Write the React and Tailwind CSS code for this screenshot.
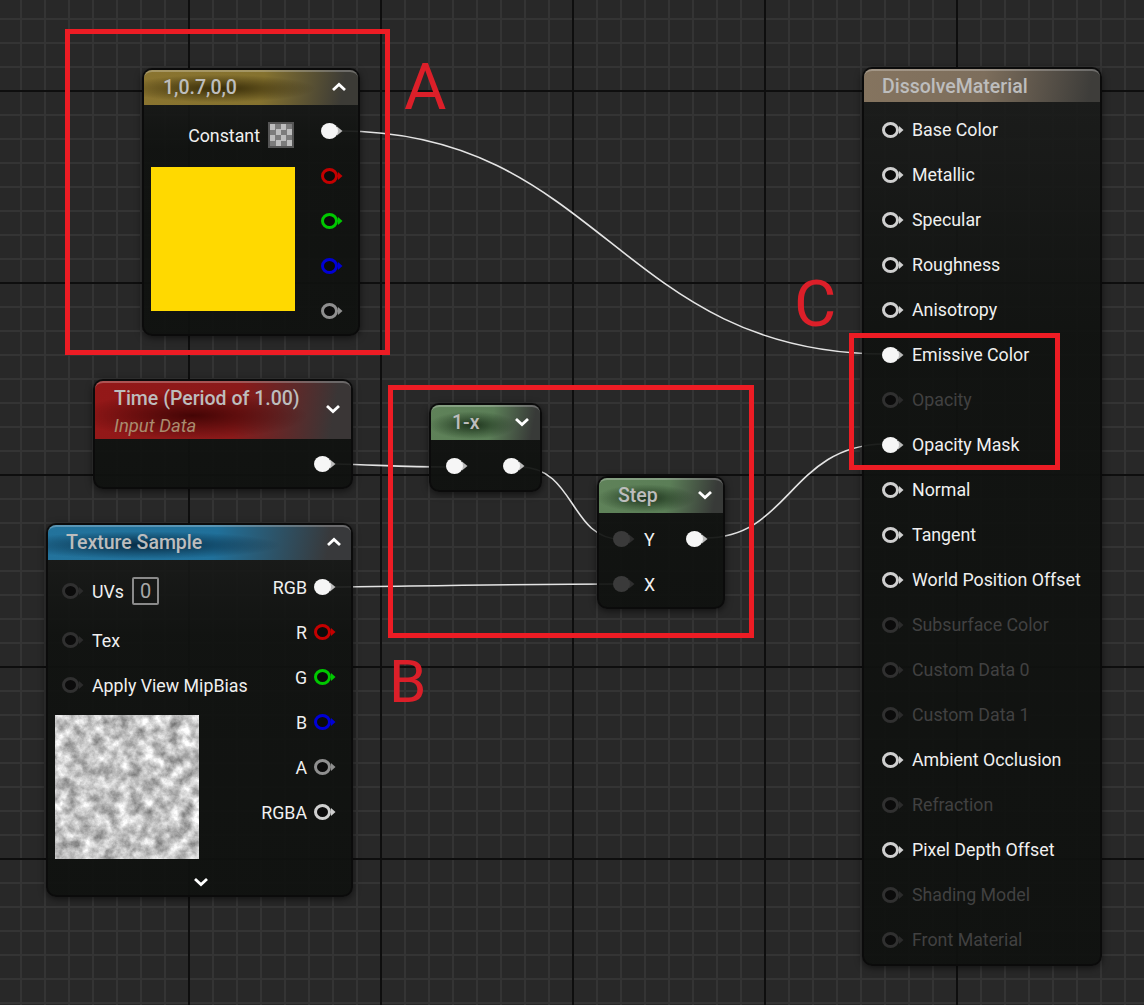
const nodeBase =
  'absolute flex flex-col rounded-[10px] border-2 border-[#0b0b0b] bg-[linear-gradient(#1b1c1be6,#101210ee_30%,#0f110fee)] shadow-[0_2px_7px_rgba(0,0,0,0.55)]';
const headerBase = 'relative flex shrink-0 rounded-t-[8px] border-t-2 border-[#ffffff40]';
const titleCls = 'pt-[2px] text-[19.5px] font-medium leading-none text-[#bdbdbd]';
const labelCls = 'pt-[2px] text-[17.8px] leading-none text-[#f0f0f0]';

const pinColors = {
  white: { ring: '#cfcfcf', tip: '#cfcfcf' },
  gray: { ring: '#8f8f8f', tip: '#8f8f8f' },
  red: { ring: '#c40000', tip: '#c40000' },
  green: { ring: '#00c800', tip: '#00c800' },
  blue: { ring: '#0000d6', tip: '#0000d6' },
  dim: { ring: '#303030', tip: '#2b2b2b' },
};

function Pin({ kind }) {
  // connected pin: solid white ball
  if (kind === 'on') {
    return (
      <svg width="22" height="16" viewBox="0 0 22 16" className="shrink-0">
        <path d="M16 3.5 L21.5 8 L16 12.5 Z" fill="#bbbbbb" />
        <ellipse cx="8.5" cy="8" rx="8.5" ry="8" fill="#f6f6f6" />
      </svg>
    );
  }
  // input of a math node with a default value
  if (kind === 'off') {
    return (
      <svg width="22" height="16" viewBox="0 0 22 16" className="shrink-0">
        <path d="M16 3.5 L21.5 8 L16 12.5 Z" fill="#2e2e2e" />
        <ellipse cx="8.5" cy="8" rx="8.5" ry="8" fill="#3a3a3a" />
      </svg>
    );
  }
  const c = pinColors[kind];
  return (
    <svg width="22" height="16" viewBox="0 0 22 16" className="shrink-0 blur-[0.3px]">
      <path d="M17 4 L21.5 8 L17 12 Z" fill={c.tip} />
      <ellipse cx="8.5" cy="8" rx="7" ry="6.5" fill="#0b0b0b" stroke={c.ring} strokeWidth="3" />
    </svg>
  );
}

function Chevron({ up, className }) {
  return (
    <svg width="16" height="10" viewBox="0 0 16 10" className={className}>
      <path d={up ? 'M2 8 L8 2.5 L14 8' : 'M2 2 L8 7.5 L14 2'} fill="none" stroke="#ffffff" strokeWidth="2.8" />
    </svg>
  );
}

function InputRow({ kind = 'white', label, faded, labelPad = '' }) {
  return (
    <div className="flex h-[45px] items-center gap-2">
      <Pin kind={kind} />
      <span className={`${labelCls} ${faded ? 'text-[#414141]!' : ''} ${labelPad}`}>{label}</span>
    </div>
  );
}

function OutputRow({ kind, label }) {
  return (
    <div className="flex h-[45px] items-center justify-end gap-[7px]">
      {label && <span className={labelCls}>{label}</span>}
      <Pin kind={kind} />
    </div>
  );
}

function ConstantNode() {
  return (
    <div className={`${nodeBase} left-[142px] top-[68px] h-[268px] w-[218px]`}>
      <div className={`${headerBase} h-[35px] items-center justify-between pb-[3px] pl-[19px] pr-[11px] bg-[radial-gradient(ellipse_45%_42%_at_35%_50%,rgba(40,30,0,0.85),transparent),linear-gradient(100deg,#8a7430,#85722f_55%,#3c3b36_92%)]`}>
        <span className={titleCls}>1,0.7,0,0</span>
        <Chevron up />
      </div>
      <div className="flex justify-between pl-[7px] pr-[15px] pt-[3px]">
        <div className="flex w-[144px] flex-col">
          <div className="mt-[4px] flex h-[45px] items-center justify-end gap-2">
            <span className={labelCls}>Constant</span>
            <div className="mr-[1px] h-[26px] w-[26px] shrink-0 border-2 border-[#555555] bg-[repeating-conic-gradient(#7c7c7c_0_25%,#bdbdbd_0_50%)] bg-[size:11px_11px]" />
          </div>
          <div className="mt-[10px] h-[144px] w-[144px] bg-[#ffd900]" />
        </div>
        <div className="flex flex-col">
          <OutputRow kind="on" />
          <OutputRow kind="red" />
          <OutputRow kind="green" />
          <OutputRow kind="blue" />
          <OutputRow kind="gray" />
        </div>
      </div>
    </div>
  );
}

function TimeNode() {
  return (
    <div className={`${nodeBase} left-[93px] top-[379px] h-[110px] w-[260px]`}>
      <div className={`${headerBase} h-[58px] items-center justify-between pl-[19px] pr-[10px] bg-[radial-gradient(ellipse_45%_42%_at_38%_58%,rgba(50,0,0,0.8),transparent),linear-gradient(100deg,#941818,#8a1a1a_55%,#3a3636_92%)]`}>
        <div className="flex flex-col gap-[8px]">
          <span className={titleCls}>Time (Period of 1.00)</span>
          <span className="text-[18.5px] italic leading-none text-[#a98c6f]">Input Data</span>
        </div>
        <Chevron className="-mt-[4px]" />
      </div>
      <div className="flex justify-end pr-[15px] pt-[2px]">
        <OutputRow kind="on" />
      </div>
    </div>
  );
}

function TextureNode() {
  return (
    <div className={`${nodeBase} left-[46px] top-[523px] h-[374px] w-[307px]`}>
      <div className={`${headerBase} h-[35px] items-center justify-between pb-[3px] pl-[18px] pr-[9px] bg-[radial-gradient(ellipse_45%_42%_at_32%_55%,rgba(0,25,45,0.8),transparent),linear-gradient(100deg,#23739c,#20709a_55%,#38393b_92%)]`}>
        <span className={titleCls}>Texture Sample</span>
        <Chevron up />
      </div>
      <div className="flex justify-between pl-[14px] pr-[15px] pt-[4px]">
        <div className="flex flex-col pt-[13px]">
          <div className="flex h-[28px] items-center gap-2">
            <Pin kind="dim" />
            <span className={labelCls}>UVs</span>
            <span className="flex h-[28px] w-[27px] items-center justify-center rounded-[2px] border-2 border-[#8a8a8a] text-[20px] leading-none text-[#a8a8a8]">0</span>
          </div>
          <div className="mt-[12px]">
            <InputRow kind="dim" label="Tex" />
          </div>
          <InputRow kind="dim" label="Apply View MipBias" />
          <NoiseTexture />
        </div>
        <div className="flex flex-col">
          <OutputRow kind="on" label="RGB" />
          <OutputRow kind="red" label="R" />
          <OutputRow kind="green" label="G" />
          <OutputRow kind="blue" label="B" />
          <OutputRow kind="gray" label="A" />
          <OutputRow kind="white" label="RGBA" />
        </div>
      </div>
      <div className="flex justify-center pl-[2px] pt-[18px]">
        <Chevron />
      </div>
    </div>
  );
}

function NoiseTexture() {
  return (
    <svg width="144" height="144" viewBox="0 0 144 144" className="-ml-[7px] mt-[8px] shrink-0">
      <filter id="clouds" colorInterpolationFilters="sRGB" x="0" y="0" width="100%" height="100%">
        <feTurbulence type="fractalNoise" baseFrequency="0.08" numOctaves="5" seed="7" />
        <feColorMatrix values="0.85 0 0 0 0.34 0.85 0 0 0 0.34 0.85 0 0 0 0.34 0 0 0 0 1" />
      </filter>
      <rect width="144" height="144" fill="#bbbbbb" filter="url(#clouds)" />
    </svg>
  );
}

function MathNode({ title, pos, titlePad, children }) {
  return (
    <div className={`${nodeBase} ${pos}`}>
      <div className={`${headerBase} h-[35px] items-center justify-between pb-[3px] pr-[10px] bg-[radial-gradient(ellipse_40%_42%_at_38%_55%,rgba(15,35,15,0.8),transparent),linear-gradient(100deg,#5f8259,#5b7e57_55%,#383a38_92%)] ${titlePad}`}>
        <span className={titleCls}>{title}</span>
        <Chevron />
      </div>
      {children}
    </div>
  );
}

const materialPins = [
  ['white', 'Base Color'],
  ['white', 'Metallic'],
  ['white', 'Specular'],
  ['white', 'Roughness'],
  ['white', 'Anisotropy'],
  ['on', 'Emissive Color'],
  ['dim', 'Opacity'],
  ['on', 'Opacity Mask'],
  ['white', 'Normal'],
  ['white', 'Tangent'],
  ['white', 'World Position Offset'],
  ['dim', 'Subsurface Color'],
  ['dim', 'Custom Data 0'],
  ['dim', 'Custom Data 1'],
  ['white', 'Ambient Occlusion'],
  ['dim', 'Refraction'],
  ['white', 'Pixel Depth Offset'],
  ['dim', 'Shading Model'],
  ['dim', 'Front Material'],
];

function MaterialNode() {
  return (
    <div className={`${nodeBase} left-[862px] top-[67px] h-[899px] w-[240px]`}>
      <div className={`${headerBase} h-[33px] items-center pb-[2px] pl-[18px] bg-[linear-gradient(100deg,#85745f,#7d6e5c_50%,#3e3d3a_95%)]`}>
        <span className={titleCls}>DissolveMaterial</span>
      </div>
      <div className="flex flex-col pl-[18px] pt-[5px]">
        {materialPins.map(([kind, label]) => (
          <InputRow key={label} kind={kind} label={label} faded={kind === 'dim'} labelPad="-mt-[2px]" />
        ))}
      </div>
    </div>
  );
}

function Wires() {
  return (
    <svg width="1144" height="1005" viewBox="0 0 1144 1005" className="absolute left-0 top-0" fill="none" stroke="#e4e4e4" strokeWidth="1.6">
      <path d="M340 131 C600 131 620 354 885 354" />
      <path d="M335 464 C380 465 400 467 450 467" />
      <path d="M520 467 C575 467 570 539 620 539" />
      <path d="M705 538 C790 538 790 445 885 444" />
      <path d="M335 587 C420 586 520 584 620 584" />
    </svg>
  );
}

function Callout({ pos }) {
  return <div className={`absolute border-[5px] border-[#ed1c24] ${pos}`} />;
}

function CalloutLetter({ pos, children }) {
  return <span className={`absolute leading-none text-[#dc1f29] ${pos}`}>{children}</span>;
}

export default function App() {
  return (
    <div className="relative h-[1005px] w-[1144px] overflow-hidden font-[Roboto,sans-serif] bg-[#282828] bg-[linear-gradient(#0e0e0e_2px,transparent_2px),linear-gradient(90deg,#0e0e0e_2px,transparent_2px),linear-gradient(#343434_2px,transparent_2px),linear-gradient(90deg,#343434_2px,transparent_2px)] bg-[size:192px_192px,192px_192px,24px_24px,24px_24px] bg-[position:0_90px,188px_0,0_18px,20px_0]">
      <Wires />

      <ConstantNode />
      <TimeNode />
      <TextureNode />

      <MathNode title="1-x" pos="left-[429px] top-[403px] h-[89px] w-[113px]" titlePad="pl-[21px]">
        <div className="flex justify-between pl-[15px] pr-[15px] pt-[3px]">
          <OutputRow kind="on" />
          <OutputRow kind="on" />
        </div>
      </MathNode>

      <MathNode title="Step" pos="left-[597px] top-[476px] h-[133px] w-[128px]" titlePad="pl-[19px]">
        <div className="flex flex-col pl-[14px] pr-[15px] pt-[3px]">
          <div className="flex items-center justify-between">
            <InputRow kind="off" label="Y" labelPad="pl-px" />
            <OutputRow kind="on" />
          </div>
          <InputRow kind="off" label="X" labelPad="pl-px" />
        </div>
      </MathNode>

      <MaterialNode />

      <Callout pos="left-[65px] top-[29px] h-[326px] w-[325px]" />
      <Callout pos="left-[388px] top-[385px] h-[253px] w-[366px]" />
      <Callout pos="left-[849px] top-[333px] h-[137px] w-[211px]" />

      <CalloutLetter pos="left-[404px] top-[55px] text-[65px]">A</CalloutLetter>
      <CalloutLetter pos="left-[389px] top-[652px] text-[60px]">B</CalloutLetter>
      <CalloutLetter pos="left-[794px] top-[272px] text-[65px]">C</CalloutLetter>
    </div>
  );
}
